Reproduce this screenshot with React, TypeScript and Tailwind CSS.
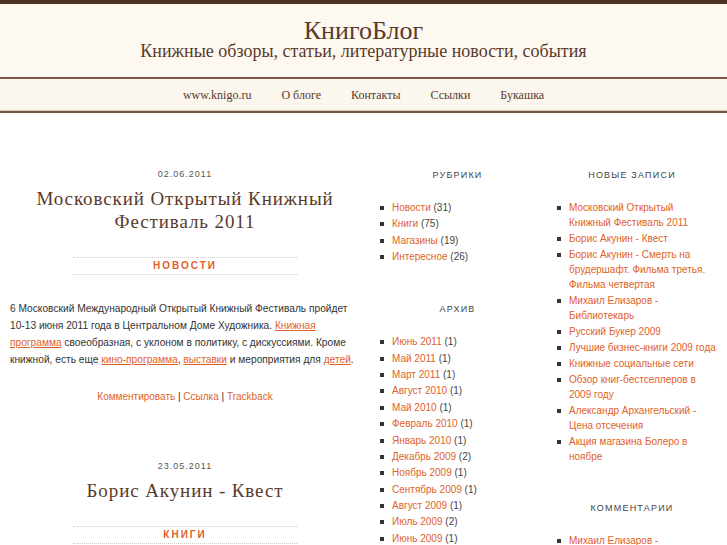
import React from "react";

const serif = "font-['Liberation_Serif','Times_New_Roman',serif]";
const sans = "font-['Liberation_Sans',Arial,sans-serif]";

const rubrics = [
  ["Новости", "31"],
  ["Книги", "75"],
  ["Магазины", "19"],
  ["Интересное", "26"],
];

const archive = [
  ["Июнь 2011", "1"],
  ["Май 2011", "1"],
  ["Март 2011", "1"],
  ["Август 2010", "1"],
  ["Май 2010", "1"],
  ["Февраль 2010", "1"],
  ["Январь 2010", "1"],
  ["Декабрь 2009", "2"],
  ["Ноябрь 2009", "1"],
  ["Сентябрь 2009", "1"],
  ["Август 2009", "1"],
  ["Июль 2009", "2"],
  ["Июнь 2009", "1"],
];

// строки переносятся так же, как на оригинале
const recent = [
  ["Московский Открытый", "Книжный Фестиваль 2011"],
  ["Борис Акунин - Квест"],
  ["Борис Акунин - Смерть на", "брудершафт. Фильма третья.", "Фильма четвертая"],
  ["Михаил Елизаров -", "Библиотекарь"],
  ["Русский Букер 2009"],
  ["Лучшие бизнес-книги 2009 года"],
  ["Книжные социальные сети"],
  ["Обзор книг-бестселлеров в", "2009 году"],
  ["Александр Архангельский -", "Цена отсечения"],
  ["Акция магазина Болеро в", "ноябре"],
];

function Heading({ children, className = "" }: { children: React.ReactNode; className?: string }) {
  return (
    <h3 className={`text-center text-[9px] leading-[12px] tracking-[1.2px] text-[#444] ${className}`}>
      {children}
    </h3>
  );
}

function Item({ children, gap = "mb-[1.4px]" }: { children: React.ReactNode; gap?: string }) {
  return (
    <li className={`flex items-start ${gap}`}>
      <span className="mt-[6px] w-[4px] h-[4px] bg-[#333] shrink-0" />
      <span className="ml-[8px] whitespace-nowrap">{children}</span>
    </li>
  );
}

function Category({ name }: { name: string }) {
  return (
    <div className="mx-auto w-[224px] border-y border-dotted border-[#ccc] text-center text-[10px] leading-[16px] font-bold tracking-[2px] text-[#e0622a]">
      {name}
    </div>
  );
}

export default function App() {
  return (
    <div className={`min-h-screen bg-white ${sans}`}>
      {/* шапка */}
      <div className="border-t-4 border-[#4e3222] bg-[#fdf9f1] h-[77px] pt-[13px] text-center text-[#5a3a2a]">
        <div className={`${serif} text-[26px] leading-[28px]`}>КнигоБлог</div>
        <div className={`${serif} text-[18px] leading-[22px] mt-[-5px]`}>
          Книжные обзоры, статьи, литературные новости, события
        </div>
      </div>
      <div className="h-[2px] bg-[#7a5646]" />
      <div className={`${serif} bg-[#fbf7ef] h-[32px] border-b border-[#d6ccc2] flex justify-center items-center gap-[30px] text-[12px] text-[#5a3a2a]`}>
        <span>www.knigo.ru</span>
        <span>О блоге</span>
        <span>Контакты</span>
        <span>Ссылки</span>
        <span>Букашка</span>
      </div>
      <div className="h-[2px] bg-[#7a5646]" />

      <div className="grid grid-cols-[370px_175px_182px]">
        {/* записи */}
        <div className="px-[10px] pt-[55px]">
          <div className="text-center text-[9px] leading-[12px] tracking-[1px] text-[#555]">02.06.2011</div>
          <h2 className={`${serif} mt-[7px] text-center text-[19px] leading-[23px] tracking-[0.9px] text-[#5a3a2a]`}>
            Московский Открытый Книжный
            <br />
            Фестиваль 2011
          </h2>
          <div className="mt-[24px]">
            <Category name="НОВОСТИ" />
          </div>
          <p className="mt-[25px] text-[10.2px] leading-[17px] text-[#333]">
            6 Московский Международный Открытый Книжный Фестиваль пройдет 10-13 июня 2011 года в Центральном Доме
            Художника. <a className="text-[#e0622a] underline">Книжная программа</a> своеобразная, с уклоном в
            политику, с дискуссиями. Кроме книжной, есть еще{" "}
            <a className="text-[#e0622a] underline">кино-программа</a>,{" "}
            <a className="text-[#e0622a] underline">выставки</a> и мероприятия для{" "}
            <a className="text-[#e0622a] underline">детей</a>.
          </p>
          <div className="mt-[22px] text-center text-[10px] leading-[14px] text-[#333]">
            <a className="text-[#e0622a]">Комментировать</a> | <a className="text-[#e0622a]">Ссылка</a> |{" "}
            <a className="text-[#e0622a]">Trackback</a>
          </div>

          <div className="mt-[56px] text-center text-[9px] leading-[12px] tracking-[1px] text-[#555]">23.05.2011</div>
          <h2 className={`${serif} mt-[7px] text-center text-[19px] leading-[23px] tracking-[0.9px] text-[#5a3a2a]`}>
            Борис Акунин - Квест
          </h2>
          <div className="mt-[24px]">
            <Category name="КНИГИ" />
          </div>
        </div>

        {/* рубрики и архив */}
        <div className="pt-[56px] text-[10px] leading-[15px] text-[#444]">
          <Heading>РУБРИКИ</Heading>
          <ul className="mt-[19px] pl-[10px]">
            {rubrics.map(([n, c]) => (
              <Item key={n}>
                <a className="text-[#e0622a]">{n}</a> ({c})
              </Item>
            ))}
          </ul>
          <Heading className="mt-[39px]">АРХИВ</Heading>
          <ul className="mt-[19px] pl-[10px]">
            {archive.map(([n, c]) => (
              <Item key={n}>
                <a className="text-[#e0622a]">{n}</a> ({c})
              </Item>
            ))}
          </ul>
        </div>

        {/* новые записи */}
        <div className="pt-[56px] pl-[12px] pr-[20px] text-[10px] leading-[15px] text-[#444]">
          <Heading>НОВЫЕ ЗАПИСИ</Heading>
          <ul className="mt-[19px]">
            {recent.map((lines) => (
              <Item key={lines[0]} gap="mb-[1px]">
                <a className="text-[#e0622a]">
                  {lines.map((l, i) => (
                    <span key={i} className="block">
                      {l}
                    </span>
                  ))}
                </a>
              </Item>
            ))}
          </ul>
          <Heading className="mt-[38px]">КОММЕНТАРИИ</Heading>
          <ul className="mt-[19px]">
            <Item>
              <a className="text-[#e0622a]">Михаил Елизаров -</a>
            </Item>
          </ul>
        </div>
      </div>
    </div>
  );
}
